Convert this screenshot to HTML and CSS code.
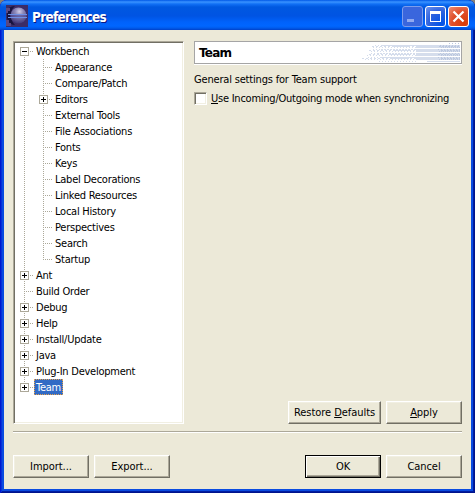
FILE: index.html
```html
<!DOCTYPE html>
<html lang="en">
<head>
<meta charset="utf-8">
<title>Preferences</title>
<link rel="stylesheet" href="styles.css">
</head>
<body>
<div class="window">
  <header class="titlebar">
    <svg class="app-icon" width="22" height="22" viewBox="0 0 22 22">
      <defs>
        <radialGradient id="moon" cx="0.55" cy="0.25" r="0.75">
          <stop offset="0" stop-color="#cfcce6"/><stop offset="0.35" stop-color="#8c88b8"/><stop offset="1" stop-color="#403878"/>
        </radialGradient>
      </defs>
      <rect width="22" height="22" fill="#3c2c66"/>
      <path d="M1 5C3 2 6 1 9 1C4 5 3 14 9 20C4 20 1 16 1 12Z" fill="#17133e"/>
      <path d="M0 3H4V6H2V8H0ZM0 15H3V18H5V21H0Z" fill="#5c4880"/>
      <circle cx="12.500" cy="10.500" r="8" fill="url(#moon)"/>
      <path d="M2 9.5H21M2 12.500H21" stroke="#6f8fe4" fill="none"/>
      <path d="M4 11H20" stroke="#4a4490" fill="none"/>
    </svg>
    <h1 class="title">Preferences</h1>
    <div class="controls">
      <span class="ctl minimize"><svg width="19" height="19"><rect x="4" y="12" width="7" height="3" fill="#91aaf0"/></svg></span>
      <span class="ctl"><svg width="19" height="19"><path d="M4 4H15V15H4ZM5 7V14H14V7Z" fill="#fff" fill-rule="evenodd"/></svg></span>
      <span class="ctl close"><svg width="19" height="19"><path d="M4.500 4.500L14.500 14.500M14.500 4.500L4.500 14.500" stroke="#fff" stroke-width="2.200"/></svg></span>
    </div>
  </header>
  <main class="client">
    <div class="panes">
      <ul class="tree">
        <li class="open"><i class="box"></i><span>Workbench</span></li>
        <li class="group">
          <ul class="branch">
            <li><span>Appearance</span></li>
            <li><span>Compare/Patch</span></li>
            <li><i class="box plus"></i><span>Editors</span></li>
            <li><span>External Tools</span></li>
            <li><span>File Associations</span></li>
            <li><span>Fonts</span></li>
            <li><span>Keys</span></li>
            <li><span>Label Decorations</span></li>
            <li><span>Linked Resources</span></li>
            <li><span>Local History</span></li>
            <li><span>Perspectives</span></li>
            <li><span>Search</span></li>
            <li class="last"><span>Startup</span></li>
          </ul>
        </li>
        <li><i class="box plus"></i><span>Ant</span></li>
        <li><span>Build Order</span></li>
        <li><i class="box plus"></i><span>Debug</span></li>
        <li><i class="box plus"></i><span>Help</span></li>
        <li><i class="box plus"></i><span>Install/Update</span></li>
        <li><i class="box plus"></i><span>Java</span></li>
        <li><i class="box plus"></i><span>Plug-In Development</span></li>
        <li class="last"><i class="box plus"></i><span class="selected">Team</span></li>
      </ul>
      <section class="page">
        <div class="banner">
          <h2>Team</h2>
          <svg width="101" height="20" viewBox="0 0 101 20" shape-rendering="crispEdges">
            <g stroke="#d5ddec" fill="none">
              <path d="M16 2.500H57M14 6.500H57M12 10.500H57M9 14.500H57M20 18.500H57" stroke-dasharray="1 2"/>
              <path d="M23 2.500H57M22 6.500H57M18 10.500H57M22 14.500H57" stroke-dasharray="2 1"/>
              <path d="M13 3.500H57M10 7.500H57M10 11.500H57M3 15.500H57" stroke-dasharray="2 2"/>
              <path d="M14 4.500H57M12 8.500H57M8 12.500H57M6 16.500H57" stroke-dasharray="1 2"/>
              <path d="M34 2.500H50M34 3.500H50M34 7.500H50M32 11.500H50M32 15.500H50" />
            </g>
            <path d="M57 2h44v3h-44zM57 6h44v3h-44zM57 10h44v3h-44zM57 14h44v3h-44zM68 18h33v1h-33z" fill="#d5ddec"/>
            <g stroke="#bcc8df" fill="none">
              <path d="M90 .5H101M81 2.500H101M79 6.500H101M81 10.500H101M79 14.500H101" stroke-dasharray="1 2"/>
              <path d="M80 3.500H101M82 7.500H101M79 11.500H101M82 15.500H101" stroke-dasharray="2 1"/>
              <path d="M82 4.500H101M80 8.500H101M82 12.500H101M80 16.500H101" stroke-dasharray="1 1"/>
            </g>
          </svg>
        </div>
        <p class="description">General settings for Team support</p>
        <label class="option"><i class="checkbox"></i><span><u>U</u>se Incoming/Outgoing mode when synchronizing</span></label>
        <div class="page-actions">
          <button class="btn wide">Restore <u>D</u>efaults</button>
          <button class="btn"><u>A</u>pply</button>
        </div>
      </section>
    </div>
    <hr class="separator">
    <footer class="actions">
      <button class="btn">Import...</button>
      <button class="btn">Export...</button>
      <button class="btn default">OK</button>
      <button class="btn">Cancel</button>
    </footer>
  </main>
</div>
</body>
</html>
```
FILE: styles.css
```css
* { box-sizing: border-box; }
body { margin: 0; background: #848078; font: 11px/16px "DejaVu Sans Condensed", "DejaVu Sans", sans-serif; letter-spacing: -0.24px; color: #000; overflow: hidden; }
ul { list-style: none; margin: 0; padding: 0; }
u { text-underline-offset: 1px; text-decoration-thickness: 1px; text-decoration-skip-ink: none; }

.window { width: 475px; height: 493px; display: flex; flex-direction: column; padding: 0 4px 4px; border-radius: 7px 7px 0 0; background: #0a4be0; box-shadow: inset 1px 0 #0019cf, inset -1px 0 #00138c, inset 0 -1px #00138c, inset 2px 0 #0831d9, inset -2px 0 #001da0, inset 0 -2px #001da0; overflow: hidden; }

.titlebar { height: 30px; flex: none; margin: 0 -4px; padding: 5px 6px 0; display: flex; background: linear-gradient(#0058e6 0, #3a93ff 2px, #1170f5 4px, #0058e0 7px, #0054e3 16px, #0062fb 22px, #0066ff 26px, #005bec 28px, #0040c8 30px); }
.app-icon { flex: none; }
.title { margin: 1px 0 0 4px; font: bold 13.5px/22px "DejaVu Sans Condensed", sans-serif; letter-spacing: -0.75px; color: #fff; text-shadow: 1px 1px #0a1883; }
.controls { margin-left: auto; display: flex; gap: 2px; padding-top: 1px; }
.ctl { width: 21px; height: 21px; border: 1px solid #fff; border-radius: 3px; background: radial-gradient(circle at 80% 85%, #0052e8, #2e62de 55%, #6f94ee); }
.ctl svg { display: block; }
.minimize { border-color: #7c9cec; background: #3a66dd; }
.close { background: radial-gradient(circle at 80% 85%, #d93c08, #e0502c 55%, #ee8d74); }

.client { flex: 1; background: #ece9d8; padding: 11px 9px; display: flex; flex-direction: column; }
.panes { display: flex; gap: 10px; height: 383px; }

.tree { width: 171px; padding-left: 9px; background: #fff; border: 1px solid; border-color: #aca899 #fff #fff #aca899; box-shadow: inset 1px 1px #716f64, inset -1px -1px #f1efe2; padding-top: 1px; }
.tree li { position: relative; height: 16px; padding-left: 11px; display: flex; align-items: center; white-space: nowrap; background: repeating-linear-gradient(90deg, #aca899 0 1px, #fff 1px 2px) 1px 8px / 9px 1px no-repeat, repeating-linear-gradient(#aca899 0 1px, #fff 1px 2px) 1px 0 / 1px 16px no-repeat; }
.tree li.open { background-size: 9px 1px, 1px 8px; background-position: 1px 8px, 1px 8px; }
.tree li.last { background-size: 9px 1px, 1px 8px; }
.tree .group { height: 208px; padding-left: 19px; background-size: 0 0, 1px 208px; }
.branch { flex: 1; }
.tree span { padding: 1px 1px 0 2px; height: 16px; line-height: 16px; }
.box { position: absolute; left: -3px; top: 4px; width: 9px; height: 9px; border: 1px solid #aca899; background: linear-gradient(#000, #000) 1px 3px / 5px 1px no-repeat #fff; }
.plus { background: linear-gradient(#000, #000) 1px 3px / 5px 1px no-repeat, linear-gradient(#000, #000) 3px 1px / 1px 5px no-repeat #fff; }
.tree .selected { padding: 1px 2px 0; color: #fff; background: #316ac5; outline: 1px dotted #e5a04a; outline-offset: -1px; }

.page { flex: 1; display: flex; flex-direction: column; }
.banner { height: 23px; border: 1px solid #a5a5a5; box-shadow: 0 1px #fff; background: #fff; display: flex; justify-content: space-between; padding: 1px 1px 0 4px; }
.banner svg { flex: none; }
.banner h2 { margin: 0; font: bold 12px/20px "DejaVu Sans", sans-serif; letter-spacing: -0.8px; }
.description { margin: 8px 0 0; height: 16px; letter-spacing: -0.18px; }
.option { display: flex; gap: 4px; align-items: center; height: 16px; margin-top: 2px; white-space: nowrap; }
.option span { padding-top: 2px; }
.checkbox { width: 13px; height: 13px; background: #fff; border: 1px solid; border-color: #aca899 #fff #fff #aca899; box-shadow: inset 1px 1px #716f64, inset -1px -1px #f1efe2; }

.page-actions { margin-top: auto; display: flex; justify-content: flex-end; gap: 5px; }
.btn { width: 76px; height: 23px; padding: 0; font: inherit; letter-spacing: -0.05px; color: #000; white-space: nowrap; background: #ece9d8; border: 1px solid; border-color: #fff #716f64 #716f64 #fff; border-radius: 0; box-shadow: inset -1px -1px #aca899, inset 1px 1px #f1efe2; }
.wide { width: 93px; }
.separator { width: 449px; height: 2px; margin: 7px 0 22px; border: 0; border-top: 1px solid #aca899; border-bottom: 1px solid #fff; }
.actions { display: flex; gap: 5px; }
.default { margin-left: auto; border-color: #000; box-shadow: inset 1px 1px #fff, inset -1px -1px #716f64, inset -2px -2px #aca899; }
```
